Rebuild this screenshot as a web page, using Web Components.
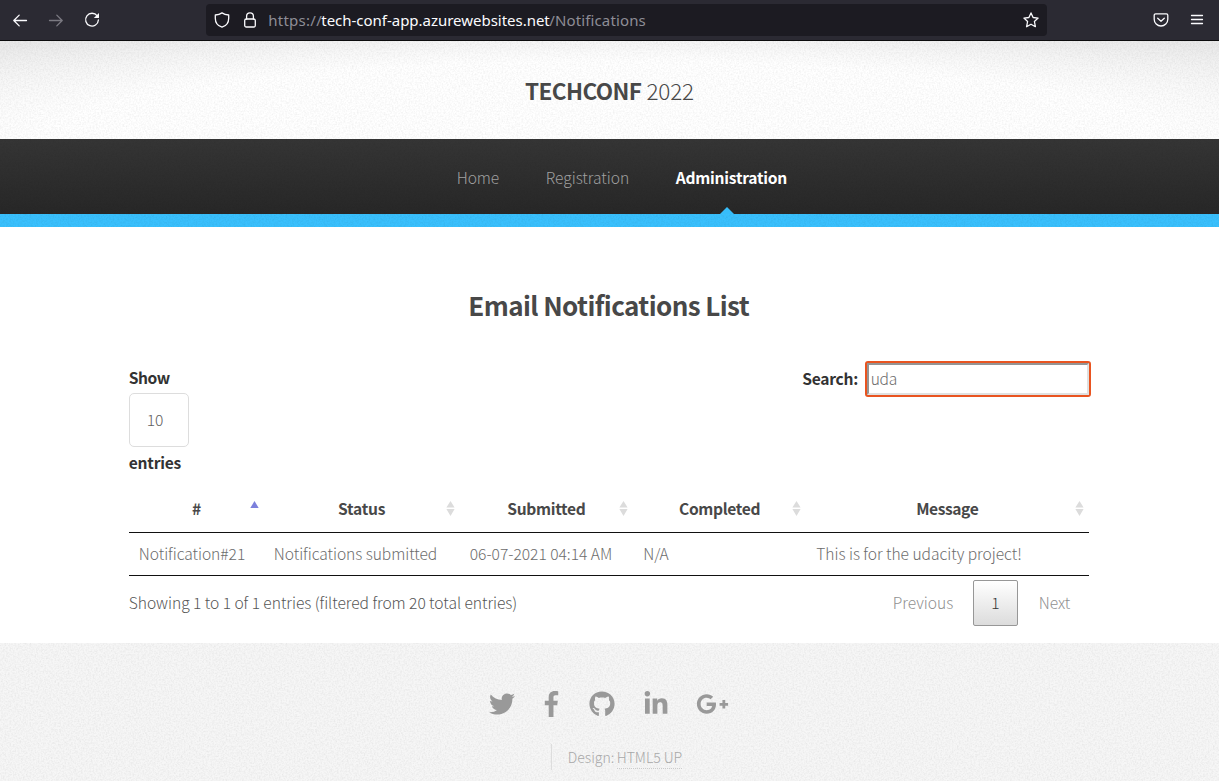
<!DOCTYPE html>
<html lang="en">
<head>
<meta charset="utf-8">
<title>TechConf 2022</title>
<style>
html,body{margin:0;height:100%;overflow:hidden;background:#fff}
body{font-family:"Noto Sans CJK SC","Noto Sans CJK JP",sans-serif;font-weight:300;font-size:15.6px;line-height:24px;color:#606060;
--grain:url("data:image/svg+xml,%3Csvg xmlns='http://www.w3.org/2000/svg' width='256' height='256'%3E%3Cfilter id='n' x='0' y='0' width='100%25' height='100%25'%3E%3CfeTurbulence type='fractalNoise' baseFrequency='.6' numOctaves='2' seed='4' stitchTiles='stitch'/%3E%3CfeColorMatrix values='0 0 0 0 0 0 0 0 0 0 0 0 0 0 0 .1 .04 0 0 -.056'/%3E%3C/filter%3E%3Crect width='256' height='256' filter='url(%23n)'/%3E%3C/svg%3E")}
</style>
</head>
<body>
<conf-app></conf-app>
<script>
const define = (name, html, ready) => customElements.define(name, class extends HTMLElement {
  connectedCallback() {
    if (this.shadowRoot) return;
    const t = document.createElement('template');
    t.innerHTML = html;
    this.attachShadow({mode: 'open'}).append(t.content.cloneNode(true));
    if (ready) ready(this, this.shadowRoot);
  }
});

/* A single line of text tracked out to a given measure. */
define('fit-text', `<style>:host{display:inline-block;white-space:nowrap;vertical-align:top}span{display:inline-block;margin-left:-.25px}</style><span><slot></slot></span>`, (el, root) => {
  const w = +el.getAttribute('w'), s = root.querySelector('span');
  const n = el.textContent.length;
  const natural = s.getBoundingClientRect().width;
  el.style.width = w + 'px';
  s.style.letterSpacing = ((w + .5 - natural) / Math.max(1, n - 1)) + 'px';
});

const ICONS = {
  back: ['0 0 16 16', '<path d="M14.5 8.500H2M7.200 3.100 1.800 8.500l5.400 5.400" class="l"/>'],
  forward: ['0 0 16 16', '<path d="M1.500 8.500H14M8.800 3.100 14.200 8.500l-5.400 5.400" class="l"/>'],
  reload: ['0 0 16 16', '<path d="M13.200 3.900A6.400 6.400 0 1 0 14.400 8" class="l"/><path d="M15 .9v4.600a.6.6 0 0 1-.6.6H9.800z"/>'],
  shield: ['0 0 16 16', '<path d="M8 .9C6.200 2.200 3.800 2.900 1.300 3v3.200c0 4.300 2.600 7.700 6.700 9 4.100-1.300 6.700-4.700 6.700-9V3C12.200 2.900 9.800 2.200 8 .9z" class="l"/>'],
  lock: ['0 0 16 16', '<rect x="2.700" y="7" width="10.600" height="8" rx="1.600" class="l"/><path d="M4.600 7V4.200a3.400 3.400 0 0 1 6.800 0V7" class="l"/>'],
  star: ['0 0 16 16', '<path d="m8 .9 2.100 4.600 5 .600-3.700 3.400 1 5.200L8 12.200l-4.400 2.500 1-5.200L.9 6.100l5-.6z" class="l"/>'],
  pocket: ['0 0 16 16', '<path d="M2.600 1.900h10.800A1.400 1.400 0 0 1 14.800 3.300v3.900a6.800 6.800 0 0 1-13.600 0V3.300a1.400 1.400 0 0 1 1.400-1.400z" class="l"/><path d="m4.700 6.300 3.300 3 3.300-3" class="l"/>'],
  menu: ['0 0 16 16', '<path d="M2.500 3.500h11M2.500 7.500h11M2.500 11.500h11" class="l"/>'],
  twitter: ['0 0 512 512', '<path d="M459.370 151.716c.325 4.548.325 9.097.325 13.645 0 138.720-105.583 298.558-298.558 298.558-59.452 0-114.680-17.219-161.137-47.106 8.447.974 16.568 1.299 25.340 1.299 49.055 0 94.213-16.568 130.274-44.832-46.132-.975-84.792-31.188-98.112-72.772 6.498.974 12.995 1.624 19.818 1.624 9.421 0 18.843-1.300 27.614-3.573-48.081-9.747-84.143-51.980-84.143-102.985v-1.299c13.969 7.797 30.214 12.670 47.431 13.319-28.264-18.843-46.781-51.005-46.781-87.391 0-19.492 5.197-37.360 14.294-52.954 51.655 63.675 129.300 105.258 216.365 109.807-1.624-7.797-2.599-15.918-2.599-24.040 0-57.828 46.782-104.934 104.934-104.934 30.213 0 57.502 12.670 76.670 33.137 23.715-4.548 46.456-13.320 66.599-25.340-7.798 24.366-24.366 44.833-46.132 57.827 21.117-2.273 41.584-8.122 60.426-16.243-14.292 20.791-32.161 39.308-52.628 54.253z"/>'],
  facebook: ['0 0 264 512', '<path d="M76.700 512V283H0v-91h76.700v-71.700C76.700 42.400 124.300 0 193.800 0c33.300 0 61.900 2.500 70.200 3.600V85h-48.200c-37.800 0-45.100 18-45.100 44.300V192H256l-11.700 91h-73.600v229"/>'],
  github: ['0 0 496 512', '<path fill-rule="evenodd" d="M244.800 8C106.100 8 0 113.300 0 252c0 110.900 69.800 205.800 169.500 239.200 12.800 2.300 17.300-5.600 17.300-12.100 0-6.200-.3-40.400-.3-61.400 0 0-70 15-84.700-29.800 0 0-11.400-29.100-27.800-36.600 0 0-22.900-15.700 1.600-15.400 0 0 24.900 2 38.600 25.800 21.900 38.600 58.600 27.500 72.900 20.900 2.300-16 8.800-27.100 16-33.700-55.900-6.200-112.300-14.300-112.300-110.500 0-27.500 7.600-41.300 23.600-58.900-2.600-6.500-11.100-33.300 2.600-67.900 20.900-6.500 69 27 69 27 20-5.600 41.500-8.500 62.800-8.500s42.800 2.900 62.800 8.500c0 0 48.100-33.600 69-27 13.700 34.700 5.200 61.400 2.600 67.900 16 17.700 25.800 31.500 25.800 58.900 0 96.500-58.900 104.200-114.800 110.500 9.200 7.900 17 22.900 17 46.400 0 33.700-.3 75.400-.3 83.600 0 6.500 4.600 14.400 17.300 12.100C428.200 457.800 496 362.900 496 252 496 113.300 383.500 8 244.800 8z"/>'],
  linkedin: ['0 0 448 512', '<path d="M100.280 448H7.400V148.900h92.880zM53.790 108.100C24.090 108.100 0 83.500 0 53.800a53.790 53.790 0 0 1 107.580 0c0 29.700-24.100 54.300-53.790 54.300zM447.900 448h-92.680V302.400c0-34.700-.7-79.200-48.290-79.200-48.290 0-55.690 37.700-55.690 76.700V448h-92.780V148.900h89.080v40.800h1.300c12.400-23.500 42.690-48.300 87.880-48.300 94 0 111.280 61.900 111.280 142.300V448z"/>'],
  google: ['0 0 640 512', '<path d="M386.061 228.496c1.834 9.692 3.143 19.384 3.143 31.956C389.204 370.205 315.599 448 204.800 448c-106.084 0-192-85.915-192-192s85.916-192 192-192c51.864 0 95.083 18.859 128.611 50.292l-52.126 50.030c-14.145-13.621-39.028-29.599-76.485-29.599-65.484 0-118.920 54.221-118.920 121.277 0 67.056 53.436 121.277 118.920 121.277 75.961 0 104.513-54.745 108.965-82.773H204.800v-66.009h181.261zm185.406 6.437V179.200h-56.001v55.733h-55.733v56.001h55.733v55.733h56.001v-55.733H627.200v-56.001h-55.733z"/>'],
  asc: ['0 0 9 16', '<path d="M4.500 1 8.700 8H.3z" fill="#7c80dc"/>'],
  both: ['0 0 9 16', '<path d="M4.500 1 8.600 7.500H.4zM4.500 16 8.600 9H.4z" fill="#dcdcdc"/>']
};
define('ui-icon', `<style>:host{display:inline-block;flex:none}svg{display:block;width:100%;height:100%;fill:currentColor}.l{fill:none;stroke:currentColor;stroke-width:1.3;stroke-linecap:round;stroke-linejoin:round}</style><svg></svg>`, (el, root) => {
  const [box, body] = ICONS[el.getAttribute('name')], svg = root.querySelector('svg');
  svg.setAttribute('viewBox', box);
  svg.innerHTML = body;
});

define('browser-bar', `<style>
:host{display:flex;box-sizing:border-box;height:41px;align-items:center;background:#2b2a33;border-bottom:1px solid #0c0c0d;color:#fbfbfe;padding-left:12px;padding-right:14px}
ui-icon{width:16px;height:16px}
.fwd{margin-left:20px;color:#7b7a82}.re{margin-left:20px}
.url{display:flex;align-items:center;box-sizing:border-box;width:841px;height:32px;margin-left:106px;padding:0 8px;border-radius:4px;background:#1c1b22;font:400 15px/32px "Noto Sans","Open Sans",sans-serif;color:#8e8d96}
.url ui-icon{color:#fbfbfe}.lock{margin:0 10.5px 0 12px}.star{margin-left:auto}
.host{color:#fbfbfe}.pocket{margin-left:auto}.menu{margin-left:20px}
</style>
<ui-icon name="back"></ui-icon><ui-icon class="fwd" name="forward"></ui-icon><ui-icon class="re" name="reload"></ui-icon>
<div class="url"><ui-icon name="shield"></ui-icon><ui-icon class="lock" name="lock"></ui-icon><fit-text w="53">https://</fit-text><fit-text class="host" w="228">tech-conf-app.azurewebsites.net</fit-text><fit-text w="96">/Notifications</fit-text><ui-icon class="star" name="star"></ui-icon></div>
<ui-icon class="pocket" name="pocket"></ui-icon><ui-icon class="menu" name="menu"></ui-icon>`);

define('site-header', `<style>
:host{display:flex;height:98px;justify-content:center;box-sizing:border-box;padding-top:32px;color:#484848;font-size:22.5px;line-height:34px;
background:var(--grain),radial-gradient(ellipse 900px 125px at 50% 100%,#fff 62%,#fff0 100%),linear-gradient(#e9e9e9,#f8f8f8)}
b{font-weight:600}
.year{margin-left:5px}
</style><b><fit-text w="116.500">TECHCONF</fit-text></b><fit-text class="year" w="47">2022</fit-text>`);

define('nav-item', `<style>
:host{display:flex;position:relative;color:#a0a0a0;height:75px;align-items:center}
:host([active]){color:#fff;font-weight:600}
:host([active])::after{content:"";position:absolute;left:43.500px;bottom:0;border:7px solid transparent;border-top:0;border-bottom-color:#37bdfa}
</style><slot></slot>`);
define('site-nav', `<style>
:host{display:block;height:88px;line-height:24px;font-size:15.6px}
nav{display:flex;height:75px;padding-left:457px;gap:47px;background:var(--grain),linear-gradient(#353535,#272727)}
.bar{height:13px;background:var(--grain),#39c0fd}
nav-item{box-sizing:border-box}
</style><nav><nav-item><fit-text w="42">Home</fit-text></nav-item><nav-item><fit-text w="83">Registration</fit-text></nav-item><nav-item active><fit-text w="111">Administration</fit-text></nav-item></nav><div class="bar"></div>`);

define('table-controls', `<style>
:host{display:flex;justify-content:space-between;height:120px;color:#333;font-weight:600}
.len{display:flex;flex-direction:column;align-items:flex-start}
.sel{box-sizing:border-box;width:60px;height:54px;border:1px solid #ddd;border-radius:5px;margin:4px 0 3px;padding:13px 0 0 17px;font-weight:300;color:#606060}
.find{display:flex;height:36px;margin:-4px -2px 0 0;align-items:flex-start}
.find>fit-text{margin-top:5px}
.box{box-sizing:border-box;width:226px;height:36px;margin-left:7px;border:2px solid #e95420;border-radius:3px;font-weight:300;color:#6c6c6c}
.in{display:block;box-sizing:border-box;height:32px;border:2px solid;border-color:#949494 #e0e0e0 #e0e0e0 #949494;padding:1px 2px}
</style>
<div class="len"><fit-text w="41">Show</fit-text><div class="sel"><fit-text w="16">10</fit-text></div><fit-text w="52">entries</fit-text></div>
<div class="find"><fit-text w="55.500">Search:</fit-text><div class="box"><div class="in"><fit-text w="26">uda</fit-text></div></div></div>`);

define('data-table', `<style>
:host{display:block}
.row{display:grid;grid-template-columns:135px 196px 173.5px 173px 1fr;border-bottom:1px solid #111}
.h,.c{display:flex;align-items:center;box-sizing:border-box}
.h{justify-content:center;height:47px;padding:0 .5px 2px 0;font-weight:600;color:#484848;position:relative}
.h ui-icon{position:absolute;right:5px;top:15px;width:9px;height:16px}
.h.n ui-icon{right:6px}
.c{height:42px;padding:0 0 2px 10px;color:#6c6c6c}
</style>
<div class="row">
<div class="h"><fit-text w="8">#</fit-text><ui-icon name="asc"></ui-icon></div>
<div class="h"><fit-text w="47">Status</fit-text><ui-icon name="both"></ui-icon></div>
<div class="h n"><fit-text w="78">Submitted</fit-text><ui-icon name="both"></ui-icon></div>
<div class="h n"><fit-text w="81">Completed</fit-text><ui-icon name="both"></ui-icon></div>
<div class="h"><fit-text w="62">Message</fit-text><ui-icon name="both"></ui-icon></div>
</div>
<div class="row">
<div class="c"><fit-text w="106">Notification#21</fit-text></div>
<div class="c"><fit-text w="163">Notifications submitted</fit-text></div>
<div class="c"><fit-text w="142">06-07-2021 04:14 AM</fit-text></div>
<div class="c"><fit-text w="25">N/A</fit-text></div>
<div class="c"><fit-text w="205">This is for the udacity project!</fit-text></div>
</div>`);

define('table-footer', `<style>
:host{display:flex;justify-content:space-between;height:54px;align-items:center;color:#555}
fit-text{margin-top:-2px}
.pages{display:flex;align-items:center;color:#909090;padding-right:19px}
.cur{display:flex;box-sizing:border-box;width:45px;height:46px;margin:0 21px 0 20px;border:1px solid #979797;border-radius:2px;background:linear-gradient(#fff,#dcdcdc);justify-content:center;align-items:center;color:#333}
</style><fit-text w="388">Showing 1 to 1 of 1 entries (filtered from 20 total entries)</fit-text>
<div class="pages"><fit-text w="60">Previous</fit-text><div class="cur"><fit-text w="8">1</fit-text></div><fit-text w="31">Next</fit-text></div>`);

define('notifications-page', `<style>
:host{display:block;height:416px;box-sizing:border-box;padding:58px 130px 0 129px;background:#fff}
h2{display:flex;justify-content:center;margin:0 0 40px;height:40px;font-size:26px;line-height:40px;font-weight:600;color:#484848}
</style><h2><fit-text w="281">Email Notifications List</fit-text></h2>
<table-controls></table-controls><data-table></data-table><table-footer></table-footer>`);

define('site-footer', `<style>
:host{display:block;height:138px;box-sizing:border-box;background:var(--grain),#f6f6f6;color:#999;padding-top:48px}
.icons{display:flex;height:26px;padding-left:488.500px;align-items:center}
ui-icon{height:26px}
.tw{width:26px}.fb{width:15px;margin-left:29.500px}.gh{width:26px;margin-left:30px}.li{width:24px;margin-left:28.500px}.gp{width:33px;margin-left:28.500px}
.credit{display:flex;box-sizing:border-box;height:26px;margin:27px 0 0 551px;padding-left:16px;border-left:1px solid #ddd;font-size:14.1px;line-height:26px;color:#a8a8a8}
.link{border-bottom:1px dotted #ccc;height:25px;margin-left:3px;box-sizing:border-box}
</style>
<div class="icons"><ui-icon class="tw" name="twitter"></ui-icon><ui-icon class="fb" name="facebook"></ui-icon><ui-icon class="gh" name="github"></ui-icon><ui-icon class="li" name="linkedin"></ui-icon><ui-icon class="gp" name="google"></ui-icon></div>
<div class="credit"><fit-text w="46">Design:</fit-text><fit-text class="link" w="65">HTML5 UP</fit-text></div>`);

define('conf-app', `<style>:host{display:flex;flex-direction:column;height:781px;width:1219px;overflow:hidden}:host>*{flex:none}</style>
<browser-bar></browser-bar><site-header></site-header><site-nav></site-nav><notifications-page></notifications-page><site-footer></site-footer>`);
</script>
</body>
</html>
